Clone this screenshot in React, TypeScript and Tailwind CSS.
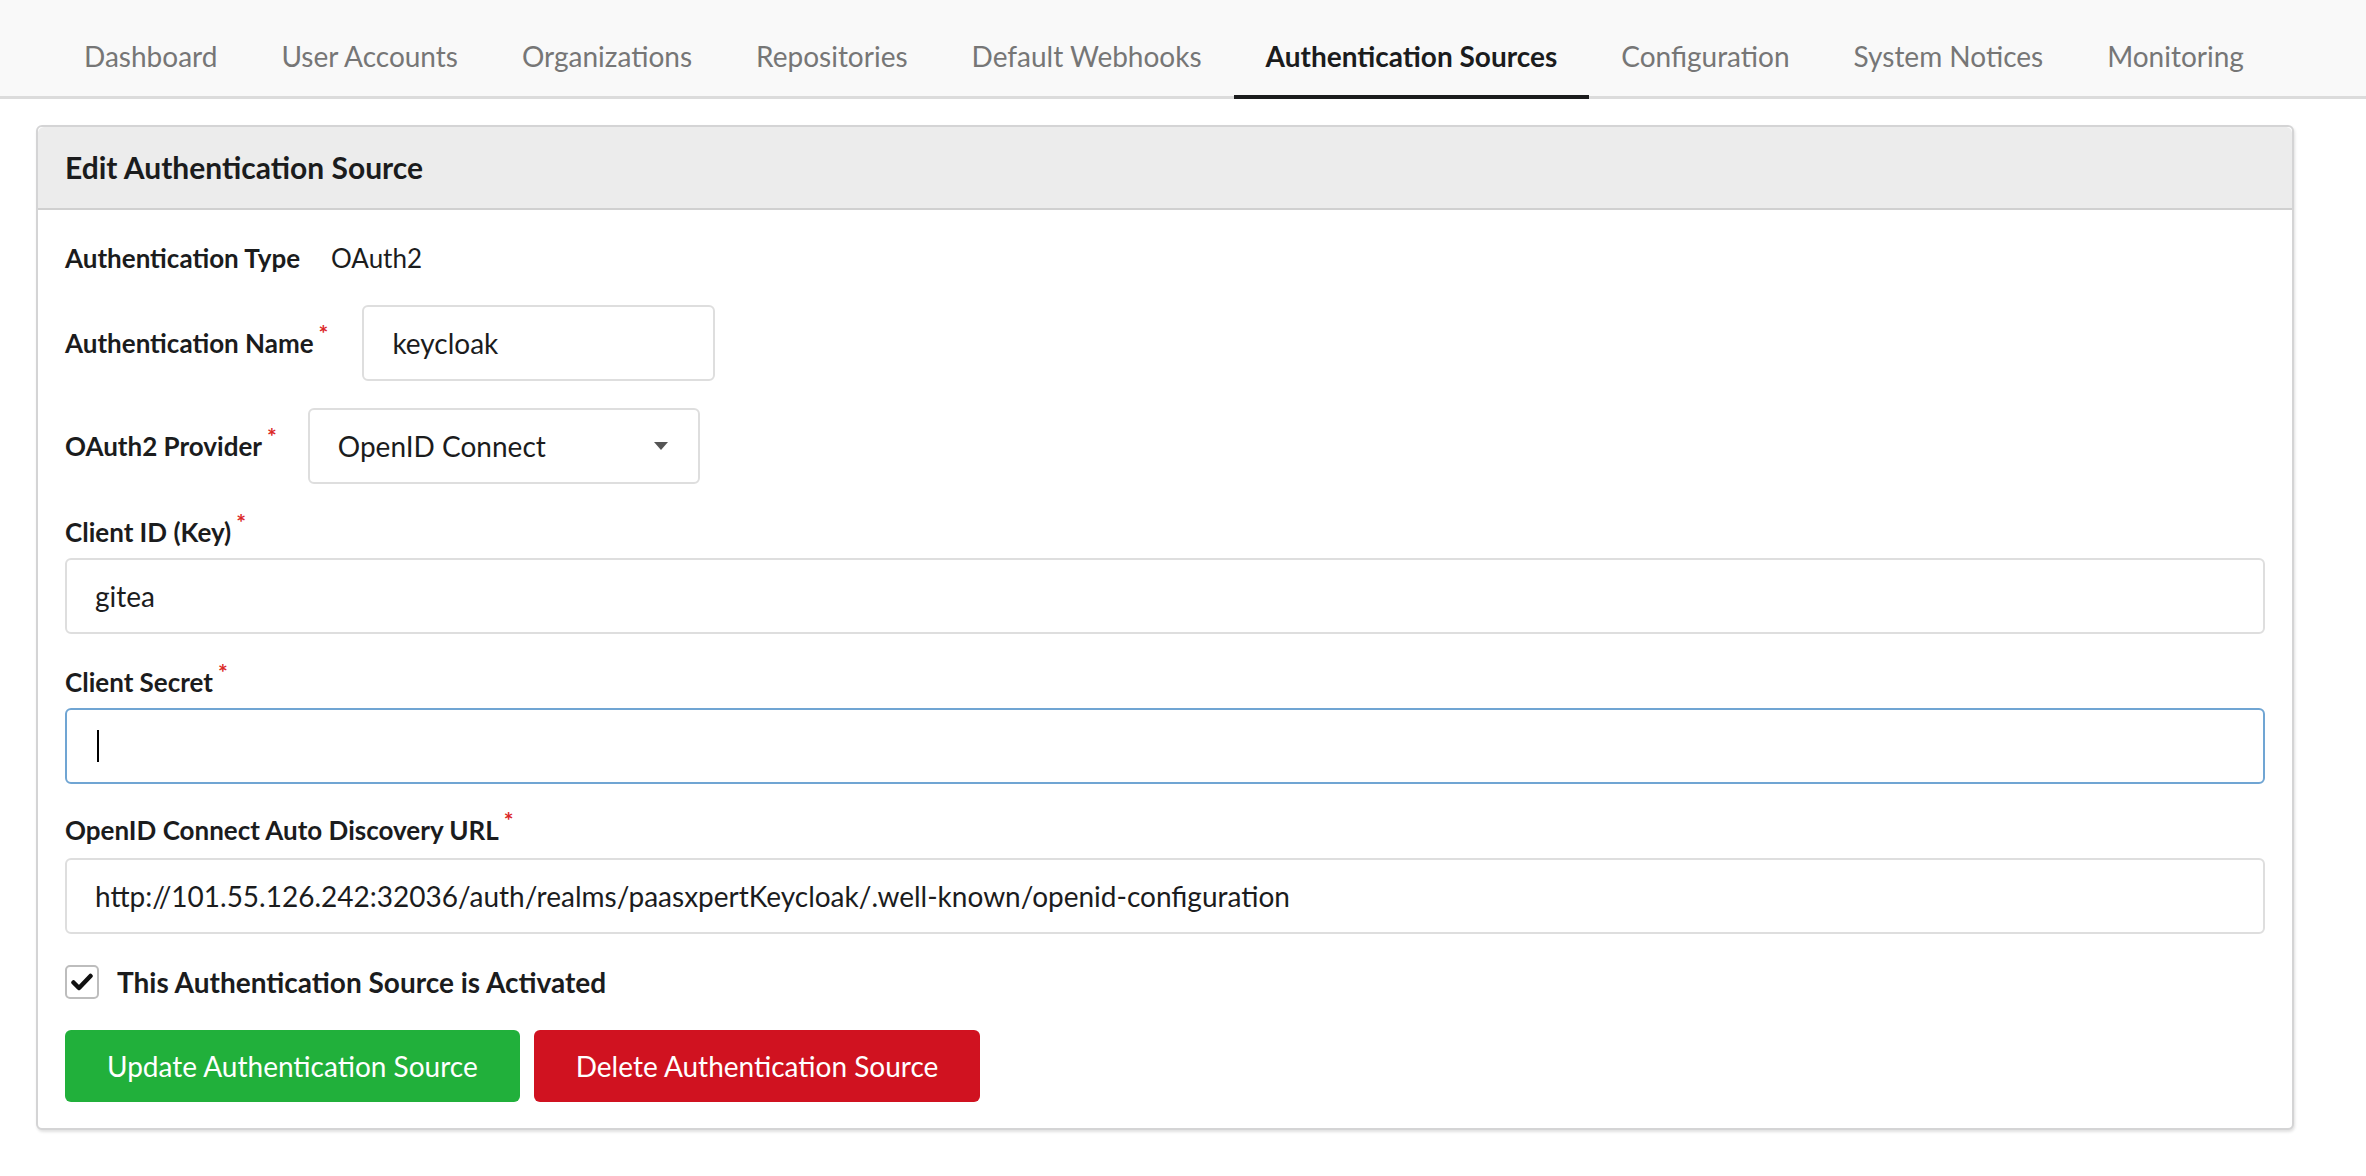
import type { ReactNode } from "react";

const tabs = [
  "Dashboard",
  "User Accounts",
  "Organizations",
  "Repositories",
  "Default Webhooks",
  "Authentication Sources",
  "Configuration",
  "System Notices",
  "Monitoring",
];

function Req() {
  return (
    <span className="relative -top-[10px] ml-[5px] text-[23px] text-[#db2828]">*</span>
  );
}

function Label({ children, required, big }: { children: ReactNode; required?: boolean; big?: boolean }) {
  return (
    <label
      className={
        "flex items-start whitespace-nowrap font-bold leading-[30px] text-[#1b1c1d] " +
        (big ? "text-[28px]" : "text-[26px]")
      }
    >
      {children}
      {required && <Req />}
    </label>
  );
}

function Box({ children, focused, className = "" }: { children?: ReactNode; focused?: boolean; className?: string }) {
  return (
    <div
      className={
        "flex h-[76px] items-center rounded-[6px] border-2 bg-white px-[28px] text-[28px] text-[#1b1c1d] " +
        (focused ? "border-[#70a5d3] " : "border-[#dedede] ") +
        className
      }
    >
      {children}
    </div>
  );
}

export default function App() {
  return (
    <div className="min-h-screen bg-white" style={{ fontFamily: "Lato, 'Open Sans', sans-serif" }}>
      {/* Admin tabs */}
      <nav className="flex h-[99px] border-b-[3px] border-[#dcdcdc] bg-[#f9f9f9] pl-[52px]">
        {tabs.map((t) => {
          const active = t === "Authentication Sources";
          return (
            <div
              key={t}
              className={
                "flex items-center px-[32px] pt-[16px] text-[28px] " +
                (active
                  ? "-mb-[3px] border-b-[4px] border-[#1b1c1d] font-bold text-[#1b1c1d]"
                  : "text-[#767676]")
              }
            >
              {t}
            </div>
          );
        })}
      </nav>

      {/* Card */}
      <div className="ml-[36px] mt-[26px] w-[2258px] rounded-[6px] border-2 border-[#d4d4d5] bg-white shadow-[1px_2px_3px_rgba(0,0,0,0.12)]">
        <div className="flex h-[83px] items-center rounded-t-[6px] border-b-2 border-[#d0d0d0] bg-[#ececec] px-[27px]">
          <h4 className="text-[30px] font-bold text-[#1b1c1d]">Edit Authentication Source</h4>
        </div>

        <div className="flex flex-col px-[27px] pb-[26px] pt-[33px]">
          <div className="flex items-center gap-[31px] text-[26px] leading-[30px]">
            <Label>Authentication Type</Label>
            <span className="text-[#1b1c1d]">OAuth2</span>
          </div>

          <div className="mt-[32px] flex items-center gap-[34px]">
            <Label required>Authentication Name</Label>
            <Box className="w-[353px]">keycloak</Box>
          </div>

          <div className="mt-[27px] flex items-center gap-[31px]">
            <Label required>OAuth2 Provider</Label>
            <Box className="w-[392px] justify-between">
              <span>OpenID Connect</span>
              <svg width="14" height="8" viewBox="0 0 14 8" className="mr-[2px]">
                <path d="M0 0h14L7 8z" fill="#555" />
              </svg>
            </Box>
          </div>

          <div className="mt-[33px]">
            <Label required>Client ID (Key)</Label>
          </div>
          <Box className="mt-[11px]">gitea</Box>

          <div className="mt-[33px]">
            <Label required>Client Secret</Label>
          </div>
          <Box focused className="mt-[11px]">
            <span className="ml-[2px] h-[32px] w-[2px] bg-black" />
          </Box>

          <div className="mt-[31px]">
            <Label required>OpenID Connect Auto Discovery URL</Label>
          </div>
          <Box className="mt-[13px]">
            http://101.55.126.242:32036/auth/realms/paasxpertKeycloak/.well-known/openid-configuration
          </Box>

          <div className="mt-[31px] flex items-center gap-[18px]">
            <span className="flex h-[34px] w-[34px] items-center justify-center rounded-[5px] border-2 border-[#bdbdbd] bg-white">
              <svg width="22" height="18" viewBox="0 0 22 18">
                <path d="M2.5 9.5l5.5 5.5L19.5 3" fill="none" stroke="#111" strokeWidth="4.5" strokeLinecap="round" strokeLinejoin="round" />
              </svg>
            </span>
            <Label big>This Authentication Source is Activated</Label>
          </div>

          <div className="mt-[31px] flex gap-[14px]">
            <button className="h-[72px] rounded-[6px] bg-[#21b03b] px-[42px] text-[28px] text-white">
              Update Authentication Source
            </button>
            <button className="h-[72px] rounded-[6px] bg-[#d01220] px-[42px] text-[28px] text-white">
              Delete Authentication Source
            </button>
          </div>
        </div>
      </div>
    </div>
  );
}
